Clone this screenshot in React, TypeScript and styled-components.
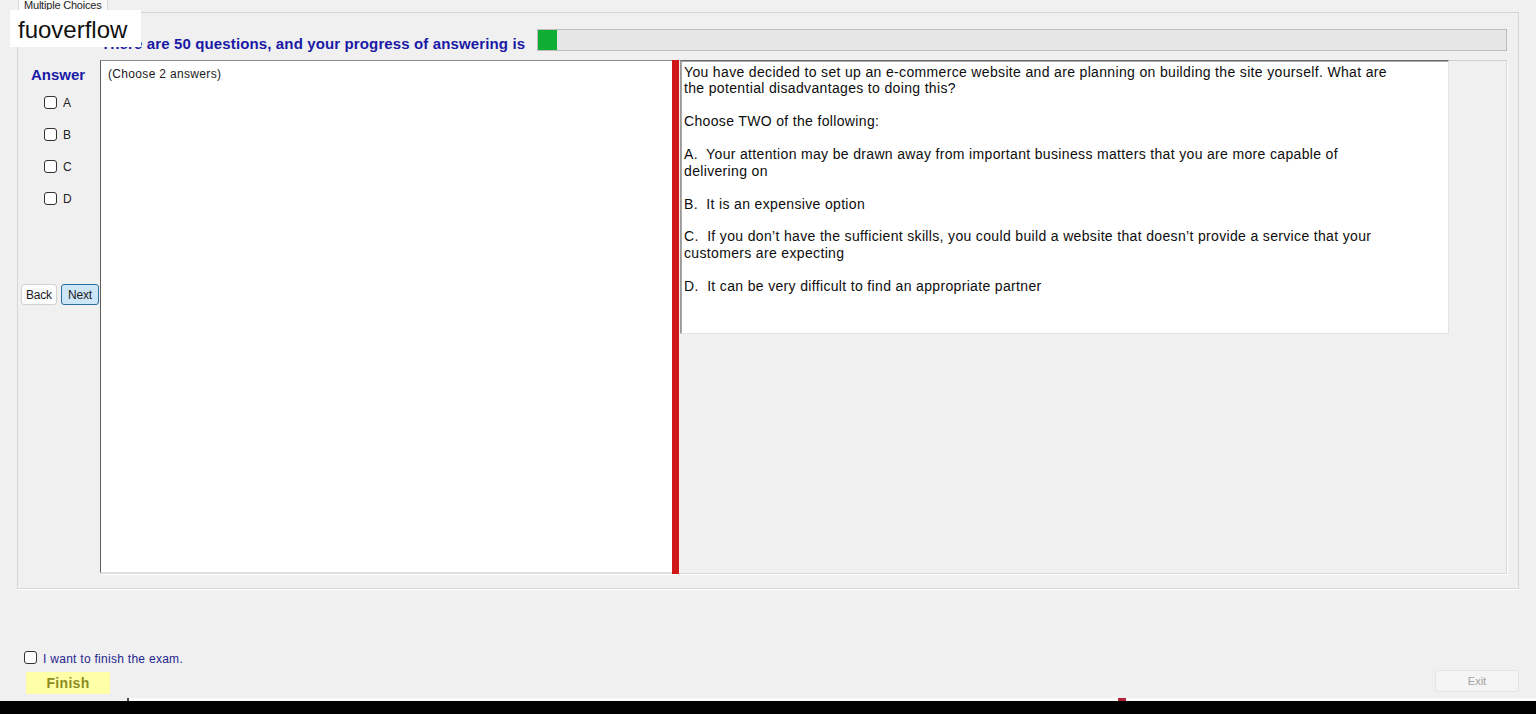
import React from "react";
import styled, { createGlobalStyle } from "styled-components";

const GlobalStyle = createGlobalStyle`
  html, body {
    margin: 0;
    padding: 0;
    background: #f0f0f0;
    overflow: hidden;
  }
  body {
    font-family: "Liberation Sans", Arial, sans-serif;
    color: #111;
  }
`;

const Screen = styled.div`
  position: relative;
  width: 1536px;
  height: 714px;
  display: flex;
  flex-direction: column;
  background: #f0f0f0;
`;

/* ---------- tab strip ---------- */

const TabStrip = styled.div`
  display: flex;
  height: 12px;
  padding-left: 18px;
`;

const Tab = styled.div`
  width: 90px;
  height: 12px;
  box-sizing: border-box;
  background: #fafafa;
  border: 1px solid #d9d9d9;
  border-top: none;
  border-bottom: none;
  overflow: hidden;
  font-size: 11px;
  line-height: 10px;
  letter-spacing: -0.2px;
  color: #1f1f1f;
  padding-left: 5px;
  white-space: nowrap;
`;

const TabPage = styled.div`
  margin-left: 17px;
  width: 1502px;
  height: 577px;
  box-sizing: border-box;
  border: 1px solid #d6d6d6;
  box-shadow: 0 1px 0 #ffffff;
  display: flex;
  flex-direction: column;
  padding-top: 16px;
`;

/* ---------- header with progress ---------- */

const Header = styled.div`
  display: flex;
  align-items: flex-end;
  height: 22px;
  padding-left: 83px;
  padding-right: 11px;
`;

const Title = styled.div`
  flex: 1;
  font-size: 15px;
  line-height: 16px;
  letter-spacing: 0.13px;
  font-weight: bold;
  color: #1a1aa6;
  white-space: nowrap;
  margin-bottom: -1px;
`;

const Progress = styled.div`
  width: 970px;
  height: 22px;
  box-sizing: border-box;
  border: 1px solid #bcbcbc;
  background: #e6e6e6;
  display: flex;
`;

const ProgressFill = styled.div`
  height: 100%;
  background: #10ad35;
`;

/* ---------- body ---------- */

const Body = styled.div`
  display: flex;
  margin-top: 9px;
  height: 514px;
`;

const AnswerColumn = styled.div`
  width: 82px;
  flex-shrink: 0;
  display: flex;
  flex-direction: column;
`;

const AnswerTitle = styled.div`
  font-size: 15px;
  line-height: 18px;
  font-weight: bold;
  color: #1a1aa6;
  padding: 6px 0 0 13px;
`;

const OptionList = styled.div`
  display: flex;
  flex-direction: column;
  gap: 19px;
  margin-top: 12px;
  padding-left: 26px;
`;

const Option = styled.label`
  display: flex;
  align-items: center;
  gap: 6px;
  height: 13px;
  font-size: 12px;
  color: #222;
`;

const Box = styled.span`
  width: 13px;
  height: 13px;
  box-sizing: border-box;
  border: 1px solid #333;
  border-radius: 3px;
  background: #fff;
  flex-shrink: 0;
`;

const NavRow = styled.div`
  display: flex;
  gap: 4px;
  margin-top: 79px;
  padding-left: 3px;
`;

const NavButton = styled.button<{ $active?: boolean }>`
  height: 21px;
  padding: 0;
  box-sizing: border-box;
  width: ${(p) => (p.$active ? "38px" : "36px")};
  border-radius: 3px;
  border: 1px solid ${(p) => (p.$active ? "#2f6f9f" : "#d2d2d2")};
  background: ${(p) => (p.$active ? "#cde6f7" : "#fdfdfd")};
  font-family: "Liberation Sans", Arial, sans-serif;
  font-size: 12px;
  letter-spacing: -0.2px;
  color: #1c1c1c;
`;

const Workspace = styled.div`
  flex: 1;
  display: flex;
  margin-right: 11px;
  border-right: 1px solid #dadada;
  border-bottom: 1px solid #dadada;
  box-shadow: 1px 1px 0 #ffffff;
`;

const NoteBox = styled.div`
  width: 572px;
  flex-shrink: 0;
  box-sizing: border-box;
  background: #fff;
  border-top: 1px solid #8a8a8a;
  border-left: 1px solid #5e5e5e;
  border-bottom: 1px solid #e0e0e0;
  font-size: 12px;
  line-height: 14px;
  letter-spacing: 0.33px;
  color: #1a1a1a;
  padding: 6px 0 0 7px;
`;

const Splitter = styled.div`
  width: 7px;
  flex-shrink: 0;
  background: #d01717;
  margin-bottom: -1px;
`;

const QuestionPane = styled.div`
  flex: 1;
  border-top: 1px solid #d0d0d0;
  display: flex;
  align-items: flex-start;
  padding-left: 1px;
`;

const QuestionBox = styled.div`
  width: 769px;
  height: 274px;
  margin-top: -1px;
  box-sizing: border-box;
  background: #fff;
  border-top: 1px solid #6a6a6a;
  border-left: 1px solid #9a9a9a;
  border-right: 1px solid #e3e3e3;
  border-bottom: 1px solid #e3e3e3;
  box-shadow: inset 1px 1px 0 #a8a8a8;
  padding: 3px 0 0 3px;
  font-size: 14px;
  line-height: 16.45px;
  letter-spacing: 0.34px;
  color: #0d0d0d;
`;

const Para = styled.p`
  margin: 0 0 16.45px;
  white-space: pre;
`;

/* ---------- footer ---------- */

const Footer = styled.div`
  flex: 1;
  display: flex;
  align-items: flex-end;
  justify-content: space-between;
  padding: 0 17px 7px 24px;
`;

const FinishGroup = styled.div`
  display: flex;
  flex-direction: column;
  gap: 5px;
`;

const Confirm = styled.label`
  display: flex;
  align-items: center;
  gap: 6px;
  font-size: 12px;
  line-height: 16px;
  letter-spacing: 0.28px;
  color: #26268f;

  & > span {
    margin-top: -3px;
  }
`;

const FinishButton = styled.button`
  margin-left: 2px;
  width: 84px;
  height: 22px;
  border: none;
  background: #ffffa8;
  font-family: "Liberation Sans", Arial, sans-serif;
  font-weight: bold;
  font-size: 14px;
  letter-spacing: 0.3px;
  color: #8c8c1e;
  padding: 0;
`;

const ExitButton = styled.button`
  width: 84px;
  height: 22px;
  margin-bottom: 2px;
  box-sizing: border-box;
  border: 1px solid #e4e4e4;
  border-radius: 3px;
  background: #f5f5f5;
  font-family: "Liberation Sans", Arial, sans-serif;
  font-size: 11px;
  color: #a3a3a3;
  padding: 0;
`;

const Taskbar = styled.div`
  height: 13px;
  background: #000;
  position: relative;
`;

const TaskStrip = styled.div`
  position: absolute;
  left: 127px;
  right: 0;
  top: -3px;
  height: 3px;
  background: #fbfbfb;
  border-left: 2px solid #444;

  &::after {
    content: "";
    position: absolute;
    left: 989px;
    top: 0;
    width: 8px;
    height: 3px;
    background: #b3223a;
  }
`;

const Watermark = styled.div`
  position: absolute;
  left: 10px;
  top: 10px;
  width: 131px;
  height: 37px;
  box-sizing: border-box;
  background: #fff;
  font-size: 24px;
  line-height: 35px;
  padding: 2px 0 0 8px;
  color: #111;
`;

const options = ["A", "B", "C", "D"];

const question = [
  [
    "You have decided to set up an e-commerce website and are planning on building the site yourself. What are",
    "the potential disadvantages to doing this?",
  ],
  ["Choose TWO of the following:"],
  [
    "A.  Your attention may be drawn away from important business matters that you are more capable of",
    "delivering on",
  ],
  ["B.  It is an expensive option"],
  [
    "C.  If you don\u2019t have the sufficient skills, you could build a website that doesn\u2019t provide a service that your",
    "customers are expecting",
  ],
  ["D.  It can be very difficult to find an appropriate partner"],
];

const answered = 1;
const total = 50;

export default function App() {
  return (
    <Screen>
      <GlobalStyle />
      <TabStrip>
        <Tab>Multiple Choices</Tab>
      </TabStrip>
      <TabPage>
        <Header>
          <Title>There are {total} questions, and your progress of answering is</Title>
          <Progress>
            <ProgressFill style={{ width: `${(answered / total) * 100}%` }} />
          </Progress>
        </Header>
        <Body>
          <AnswerColumn>
            <AnswerTitle>Answer</AnswerTitle>
            <OptionList>
              {options.map((o) => (
                <Option key={o}>
                  <Box />
                  {o}
                </Option>
              ))}
            </OptionList>
            <NavRow>
              <NavButton>Back</NavButton>
              <NavButton $active>Next</NavButton>
            </NavRow>
          </AnswerColumn>
          <Workspace>
            <NoteBox>(Choose 2 answers)</NoteBox>
            <Splitter />
            <QuestionPane>
              <QuestionBox>
                {question.map((lines, i) => (
                  <Para key={i}>{lines.join("\n")}</Para>
                ))}
              </QuestionBox>
            </QuestionPane>
          </Workspace>
        </Body>
      </TabPage>
      <Footer>
        <FinishGroup>
          <Confirm>
            <Box />I want to finish the exam.
          </Confirm>
          <FinishButton>Finish</FinishButton>
        </FinishGroup>
        <ExitButton disabled>Exit</ExitButton>
      </Footer>
      <Taskbar>
        <TaskStrip />
      </Taskbar>
      <Watermark>fuoverflow</Watermark>
    </Screen>
  );
}
